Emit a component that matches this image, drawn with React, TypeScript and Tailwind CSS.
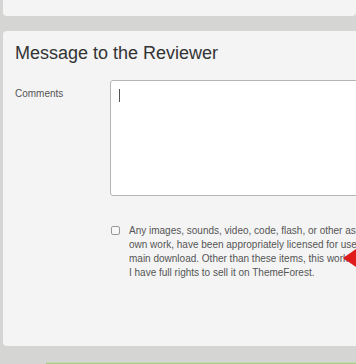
const agreement = [
  "Any images, sounds, video, code, flash, or other assets that are not my",
  "own work, have been appropriately licensed for use in the file preview or",
  "main download. Other than these items, this work is entirely my own and",
  "I have full rights to sell it on ThemeForest.",
];

export default function App() {
  return (
    <div className="relative w-[356px] h-[364px] overflow-hidden bg-[#d5d5d3] pl-[3px] font-['Liberation_Sans',Arial,sans-serif]">
      {/* previous panel, bottom edge */}
      <div className="h-[16px] bg-[#f4f4f4] rounded-b-[4px]" />

      {/* Message panel */}
      <div className="mt-[15px] h-[315px] w-[400px] bg-[#f4f4f4] rounded-[4px] pl-[12px] pt-[12px]">
        <h2 className="text-[18px] leading-[21px] text-[#333]">Message to the Reviewer</h2>

        <div className="mt-[16px] flex">
          <label className="w-[95px] pt-[8px] text-[10px] leading-[12px] text-[#555]">Comments</label>
          <div className="w-[280px] h-[116px] bg-white border border-[#b4b4b4] rounded-[3px] pl-[8px] pt-[8px]">
            <div className="w-px h-[13px] bg-[#555]" />
          </div>
        </div>

        <div className="mt-[27px] ml-[96px] flex gap-[9px]">
          <div className="mt-[3px] w-[9px] h-[9px] shrink-0 border border-[#999] rounded-[2px] bg-[#f8f8f8]" />
          <p className="pt-px text-[10px] leading-[14px] text-[#555] whitespace-nowrap">
            {agreement.map((line) => (
              <span key={line} className="block">
                {line}
              </span>
            ))}
          </p>
        </div>
      </div>

      {/* next button edge */}
      <div className="mt-[16px] ml-[43px] h-[4px] w-[320px] bg-[#a9c98a] border-t border-[#c6dcb0]" />

      {/* annotation arrow */}
      <svg className="absolute left-[340px] top-[248px]" width="16" height="22" viewBox="0 0 16 22">
        <polygon points="3,10 16,1 16,19" fill="#e01b1b" />
      </svg>
    </div>
  );
}
